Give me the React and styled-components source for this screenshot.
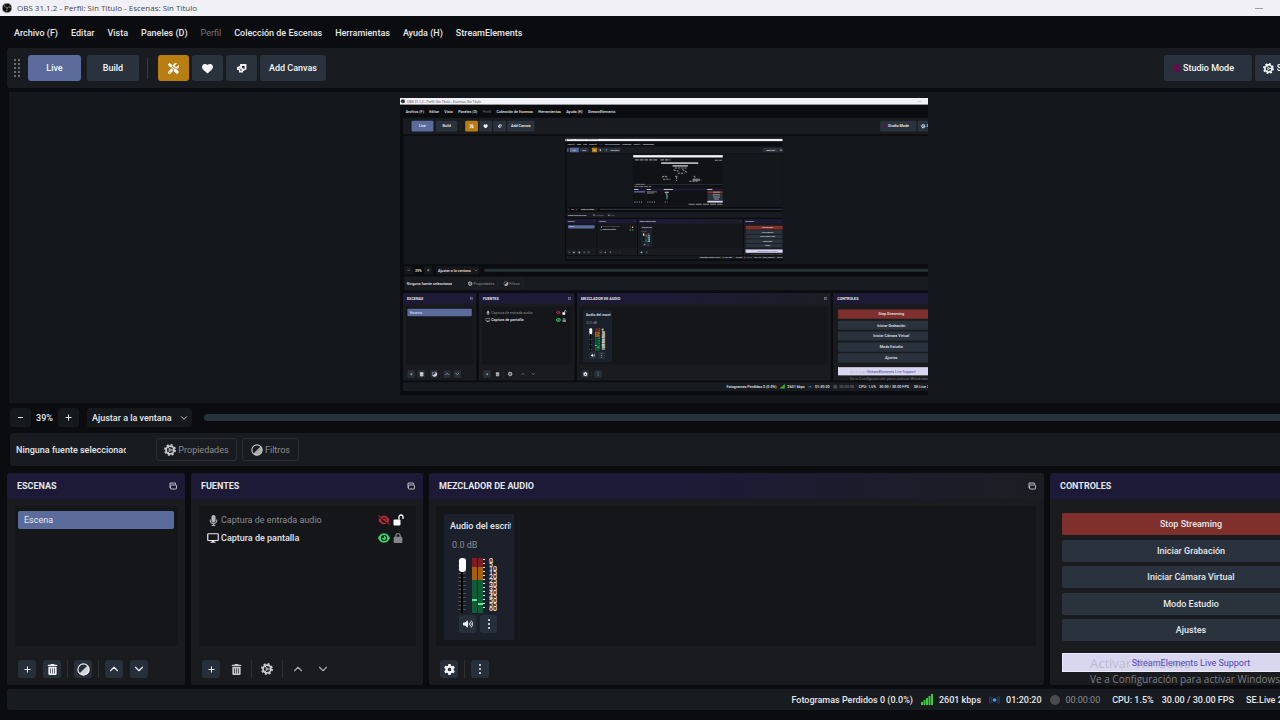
import React from "react";
import styled, { createGlobalStyle, css } from "styled-components";
import { SiObsstudio } from "react-icons/si";
import {
  FaScrewdriverWrench,
  FaHeart,
  FaTrashCan,
  FaMicrophone,
  FaEye,
  FaEyeSlash,
  FaLock,
  FaGear,
  FaVolumeHigh,
} from "react-icons/fa6";
import { LuChevronDown, LuChevronUp } from "react-icons/lu";

const PREVIEW_SCALE = 0.4125;
const PREVIEW_DEPTH = 2;

const c = {
  page: "#0b0c0f",
  bar: "#181b1f",
  button: "#2a333d",
  list: "#14161a",
  accent: "#5a6b9c",
  text: "#e6e7ea",
  dim: "#8b8d91",
  line: "#2b2f34",
};

const GlobalStyle = createGlobalStyle`
  html, body, #root { height: 100%; }
  body { margin: 0; background: ${c.page}; overflow: hidden; }
  *, *::before, *::after { box-sizing: border-box; }
  button, input, select { font: inherit; color: inherit; margin: 0; }
`;

const Screen = styled.div`
  display: flex;
  flex-direction: column;
  position: relative;
  height: 100%;
  overflow: hidden;
  background: ${c.page};
  color: ${c.text};
  font: 500 9px/12px Roboto, "Liberation Sans", sans-serif;
`;

const TitleBar = styled.header`
  display: flex;
  align-items: center;
  gap: 5px;
  flex: none;
  height: 16px;
  padding: 0 17px 0 2px;
  background: #f1f0f6;
  color: #45454b;
  font: 400 8px/12px "Open Sans", "Noto Sans", sans-serif;
`;

const AppMark = styled.span`
  display: flex;
  border-radius: 50%;
  background: #111;
  color: #d8d8dc;
`;

const WindowTitle = styled.h1`
  flex: 1;
  margin: 0;
  font: inherit;
`;

const Minimize = styled.button`
  width: 8px;
  height: 10px;
  padding: 0;
  border: 0;
  background: linear-gradient(#a0a0a6, #a0a0a6) center / 8px 1px no-repeat;
`;

const Frame = styled.div`
  display: flex;
  flex-direction: column;
  flex: 1;
  min-height: 0;
  width: calc(100% + 42px);
  padding: 0 0 10px 7px;
`;

const Menu = styled.nav`
  display: flex;
  align-items: center;
  gap: 13px;
  flex: none;
  height: 32px;
  padding: 2px 0 0 7px;
`;

const MenuLink = styled.a`
  color: ${(p) => (p.$dim ? "#75767a" : c.text)};
  font-weight: ${(p) => (p.$dim ? 400 : 500)};
  text-decoration: none;
  white-space: nowrap;
`;

const Toolbar = styled.div`
  display: flex;
  align-items: center;
  gap: 3px;
  flex: none;
  height: 40px;
  margin-bottom: 4px;
  padding: 0 4px 0 6px;
  background: ${c.bar};
  border-radius: 3px;
`;

const Grip = styled.span`
  width: 8px;
  height: 20px;
  margin-right: 4px;
  background: radial-gradient(circle, #6a6d71 1px, transparent 1px) 0 0 / 4px 4px;
`;

const ToolButton = styled.button`
  display: flex;
  align-items: center;
  justify-content: center;
  gap: 3px;
  width: ${(p) => p.$w}px;
  height: 26px;
  margin-right: ${(p) => p.$after || 0}px;
  padding: ${(p) => (p.$mark ? "0 8px 0 0" : "0")};
  border: 0;
  border-radius: 3px;
  background: ${(p) => p.$bg || c.button};
  color: #f6f6f8;
  white-space: nowrap;
`;

const ToolDivider = styled.span`
  width: 1px;
  height: 21px;
  margin: 0 7px 0 5px;
  background: #393a33;
`;

const Spacer = styled.span`
  flex: 1;
`;

const RecordMark = styled.span`
  width: 6px;
  height: 8px;
  border-radius: 3px;
  background: #650c4d;
`;

const Preview = styled.main`
  display: flex;
  align-items: center;
  justify-content: center;
  flex: 1;
  min-height: 0;
  margin: 0 3px 5px 2px;
  padding-bottom: 2px;
  background: #14171b;
  overflow: hidden;
`;

const Monitor = styled.div`
  flex: none;
  width: 528px;
  height: 297px;
  overflow: hidden;
`;

const MonitorCanvas = styled.div`
  width: 1280px;
  height: 720px;
  transform: scale(${PREVIEW_SCALE});
  transform-origin: 0 0;
`;

const ZoomRow = styled.div`
  display: flex;
  align-items: center;
  flex: none;
  height: 19px;
  margin: 0 0 6px 3px;
`;

const ZoomButton = styled.button`
  display: flex;
  align-items: center;
  justify-content: center;
  width: 21px;
  height: 19px;
  padding: 0;
  border: 0;
  border-radius: 3px;
  background: #16191c;
`;

const ZoomValue = styled.output`
  width: 27px;
  text-align: center;
`;

const SelectBox = styled.label`
  display: grid;
  grid-template-columns: 1fr 10px;
  align-items: center;
  width: 105px;
  height: 19px;
  margin: 0 12px 0 8px;
  padding-right: 3px;
  border-radius: 3px;
  background: #16191c;
`;

const Select = styled.select`
  appearance: none;
  width: 100%;
  height: 19px;
  padding: 0 0 0 5px;
  border: 0;
  background: transparent;
`;

const ScrollTrack = styled.div`
  flex: 1;
  height: 7px;
  border-radius: 4px;
  background: #28323a;
`;

const SourceRow = styled.div`
  display: flex;
  align-items: center;
  flex: none;
  height: 33px;
  margin: 0 0 7px 3px;
  padding-left: 6px;
  border-radius: 3px;
  background: ${c.bar};
`;

const SourceName = styled.span`
  width: 110px;
  margin-right: 30px;
  overflow: hidden;
  white-space: nowrap;
`;

const GhostButton = styled.button`
  display: flex;
  align-items: center;
  justify-content: center;
  gap: 2px;
  width: ${(p) => p.$w}px;
  height: 23px;
  margin-right: 5px;
  padding: 0;
  border: 1px solid ${c.line};
  border-radius: 3px;
  background: transparent;
  color: ${c.dim};
  font-weight: 400;
  svg { color: #c4c5c8; }
`;

const Docks = styled.div`
  display: grid;
  grid-template-columns: 178px 232px 1fr 272px;
  gap: 6px;
  flex: none;
  height: 212px;
  margin-bottom: 4px;
`;

const Dock = styled.section`
  display: flex;
  flex-direction: column;
  min-width: 0;
  border-radius: 3px;
  background: #191b1e;
  overflow: hidden;
`;

const DockHeader = styled.header`
  display: flex;
  align-items: center;
  justify-content: space-between;
  flex: none;
  height: 26px;
  padding: 0 8px 0 10px;
  background: ${(p) => (p.$fade ? "linear-gradient(90deg, #1c1a36 40%, #1c1d23)" : "#1c1a36")};
`;

const DockTitle = styled.h2`
  margin: 0;
  font: 700 9px/14px Roboto, "Liberation Sans", sans-serif;
`;

const FloatButton = styled.button`
  display: flex;
  padding: 0;
  border: 0;
  background: transparent;
  color: #b9bbc2;
`;

const List = styled.ul`
  flex: 1;
  margin: 7px 7px 0 8px;
  padding: ${(p) => p.$pad || "5px 4px 0 3px"};
  list-style: none;
  background: ${c.list};
`;

const SceneItem = styled.li`
  height: 18px;
  padding: 0 6px;
  border-radius: 2px;
  background: ${c.accent};
  font-weight: 400;
  line-height: 18px;
`;

const SourceItem = styled.li`
  display: grid;
  grid-template-columns: 12px 1fr 12px 12px;
  align-items: center;
  column-gap: 2px;
  height: 18px;
  color: ${(p) => (p.$off ? c.dim : c.text)};
  font-weight: ${(p) => (p.$off ? 400 : 500)};
`;

const SourceIcon = styled.span`
  display: flex;
  justify-content: center;
  color: ${(p) => p.$color || "#e8e8ea"};
`;

const Toggle = styled.button`
  display: flex;
  justify-content: center;
  padding: 0;
  border: 0;
  background: transparent;
  color: ${(p) => p.$color};
`;

const DockFooter = styled.footer`
  display: flex;
  align-items: center;
  flex: none;
  gap: 7px;
  height: 39px;
  padding: 7px 0 0 11px;
`;

const SmallButton = styled.button`
  display: flex;
  align-items: center;
  justify-content: center;
  width: ${(p) => p.$w || 18}px;
  height: 18px;
  padding: 0;
  border: 0;
  border-radius: 3px;
  background: ${(p) => (p.$flat ? "transparent" : "#27303a")};
  color: ${(p) => p.$color || "#f0f0f3"};
`;

const FooterDivider = styled.span`
  width: 1px;
  height: 18px;
  margin: 0 -1px;
  background: ${c.line};
`;

const MixerArea = styled.div`
  flex: 1;
  min-height: 0;
  margin: 7px 8px 0 7px;
  padding: 8px 8px 0;
  background: ${c.list};
`;

const Strip = styled.article`
  display: flex;
  flex-direction: column;
  width: 70px;
  height: 126px;
  padding: 6px 3px 6px 6px;
  border-radius: 2px;
  background: #1b202b;
`;

const StripName = styled.h3`
  margin: 0;
  font: inherit;
  white-space: nowrap;
  overflow: hidden;
`;

const StripLevel = styled.output`
  margin: 7px 0 0 2px;
  color: ${c.dim};
  font-weight: 400;
`;

const StripBody = styled.div`
  display: flex;
  height: 55px;
  margin: 7px 0 0 8px;
`;

const fader = css`
  width: 7px;
  height: 14px;
  border: 0;
  border-radius: 3px;
  background: #fff;
`;

const Fader = styled.input`
  appearance: none;
  writing-mode: vertical-lr;
  direction: rtl;
  width: 8px;
  height: 55px;
  margin-right: 6px;
  background:
    linear-gradient(#000, #000) center / 2px 100% no-repeat,
    repeating-linear-gradient(transparent 0 3px, #4a4e54 3px 4px);
  &::-webkit-slider-thumb { appearance: none; ${fader} }
`;

const StripButtons = styled.div`
  display: flex;
  gap: 4px;
  margin: 2px 0 0 9px;
`;

const ControlsBody = styled.div`
  padding: 14px 2px 0 12px;
`;

const ControlStack = styled.div`
  display: flex;
  flex-direction: column;
  justify-content: space-between;
  height: 128px;
  margin-bottom: 12px;
`;

const ControlButton = styled.button`
  width: 100%;
  height: 22px;
  padding: 0;
  border: 0;
  border-radius: 2px;
  background: ${(p) => (p.$live ? "#7f302c" : c.button)};
`;

const SupportLink = styled.a`
  display: block;
  height: 19px;
  border: 1px solid #eceaf8;
  background: #d9d7ef;
  color: #4b44bd;
  font-weight: 400;
  line-height: 18px;
  text-align: center;
  text-decoration: none;
`;

const StatusBar = styled.footer`
  display: flex;
  align-items: center;
  justify-content: flex-end;
  flex: none;
  height: 21px;
  background: ${c.bar};
  border-radius: 3px;
  white-space: nowrap;
`;

const StatusItem = styled.span`
  display: flex;
  align-items: center;
  gap: 6px;
  margin-right: ${(p) => p.$after}px;
  color: ${(p) => (p.$dim ? c.dim : c.text)};
  font-weight: ${(p) => (p.$dim ? 400 : 500)};
`;

const VersionItem = styled.span`
  width: 76px;
`;

const RecordDot = styled.span`
  width: 10px;
  height: 10px;
  border-radius: 50%;
  background: #4a4b4e;
`;

const Watermark = styled.aside`
  position: absolute;
  right: 0;
  bottom: 34px;
  width: 190px;
  color: rgba(140, 140, 146, 0.9);
  font: 400 10px/14px "Open Sans", "Noto Sans", sans-serif;
  white-space: nowrap;
  pointer-events: none;
`;

const WatermarkTitle = styled.p`
  margin: 0 0 1px;
  color: rgba(150, 150, 160, 0.45);
  font-size: 13px;
  line-height: 16px;
`;

const WatermarkText = styled.p`
  margin: 0;
`;

const CogIcon = ({ size = 12 }) => (
  <svg width={size} height={size} viewBox="0 0 24 24" fill="none" stroke="currentColor">
    <circle cx="12" cy="12" r="10" strokeWidth="4" strokeDasharray="3.9 3.95" />
    <circle cx="12" cy="12" r="7.8" strokeWidth="3.6" />
    <circle cx="12" cy="12" r="2" strokeWidth="2" />
    <path d="M14 12h6M11 10 8 5.500M11 14l-3 4.500" strokeWidth="2" />
  </svg>
);

const FilterIcon = ({ size = 12 }) => (
  <svg width={size} height={size} viewBox="0 0 24 24">
    <circle cx="12" cy="12" r="10.300" fill="none" stroke="currentColor" strokeWidth="2.200" />
    <path d="M19.500 4.500A10.500 10.500 0 0 1 4.500 19.500z" fill="currentColor" opacity="0.85" />
  </svg>
);

const HornIcon = () => (
  <svg width="10" height="10" viewBox="0 0 20 20" fill="none" stroke="currentColor" strokeWidth="3.600">
    <path d="M8 4h9v7.500l-4 2.500-5-3.500z" />
    <path d="M7 7 1.500 9.500M1.500 8v4.500H6M5.500 13v4.500h5V14" strokeWidth="3" />
  </svg>
);

const WindowsIcon = () => (
  <svg width="8" height="8" viewBox="0 0 16 16" fill="none" stroke="currentColor" strokeWidth="2">
    <path d="M2 12V2h11v3" />
    <rect x="3" y="6" width="12" height="8" rx="1" />
  </svg>
);

const ScreenIcon = () => (
  <svg width="12" height="10" viewBox="0 0 24 20" fill="none" stroke="currentColor" strokeWidth="2.400">
    <rect x="1.500" y="1.500" width="21" height="13.500" rx="1" />
    <path d="M7 18.500h10" />
    <path d="M9.500 15h5v3h-5z" fill="currentColor" stroke="none" />
  </svg>
);

const OpenLockIcon = () => (
  <svg width="11" height="12" viewBox="0 0 22 24">
    <rect x="1" y="11" width="14" height="12" rx="2" fill="currentColor" />
    <path d="M12 11V6a4 4 0 0 1 8 0v4" fill="none" stroke="currentColor" strokeWidth="2.600" />
  </svg>
);

const DotsIcon = () => (
  <svg width="4" height="12" viewBox="0 0 4 12" fill="currentColor">
    <circle cx="2" cy="2" r="1" />
    <circle cx="2" cy="6" r="1" />
    <circle cx="2" cy="10" r="1" />
  </svg>
);

const PlusIcon = () => (
  <svg width="7" height="7" viewBox="0 0 7 7" stroke="currentColor">
    <path d="M3.500 0.500v6M0.500 3.500h6" />
  </svg>
);

const MinusIcon = () => (
  <svg width="7" height="7" viewBox="0 0 7 7" stroke="currentColor">
    <path d="M1 3.500h5" />
  </svg>
);

const SignalIcon = () => (
  <svg width="12" height="11" viewBox="0 0 12 11" fill="#3ccb3c">
    <path d="M0 8h2v3H0zM2.500 6h2v5h-2zM5 4h2v7H5zM7.500 2h2v9h-2zM10 0h2v11h-2z" />
  </svg>
);

const LiveIcon = () => (
  <svg width="11" height="10" viewBox="0 0 12 10" fill="none" stroke="#1f5690">
    <circle cx="6" cy="5" r="2" fill="#4a9cf0" stroke="none" />
    <path d="M3.500 2a4 4 0 0 0 0 6M8.500 2a4 4 0 0 1 0 6M1.700 1a6 6 0 0 0 0 8M10.300 1a6 6 0 0 1 0 8" />
  </svg>
);

const METER_STEPS = [0, 5, 10, 15, 20, 25, 30, 35, 40, 45, 50, 55, 60];

const MeterDrawing = () => (
  <svg width="28" height="56" viewBox="0 0 28 56">
    {[0, 6].map((x) => (
      <g key={x}>
        <rect x={x} y="0" width="5" height="9" fill="#7d1f22" />
        <rect x={x} y="9" width="5" height="13" fill="#a5600f" />
        <rect x={x} y="22" width="5" height="33" fill="#0f5c38" />
      </g>
    ))}
    <rect x="0" y="41" width="5" height="2" fill="#4bf08a" />
    <rect x="6" y="45" width="5" height="2" fill="#4bf08a" />
    {METER_STEPS.map((v, i) => (
      <g key={v} fill="#e8e8ea">
        <rect x="11" y={i * 4 + 1} width="2" height="1" />
        <text x="17" y={i * 4 + 5} fontSize="7">
          {v}
        </text>
      </g>
    ))}
  </svg>
);

/* The innermost repetition of the screen, too small for readable text. */
const TinyScreen = () => (
  <svg width="528" height="297" viewBox="0 0 528 297">
    <rect width="528" height="297" fill="#101216" />
    <rect width="528" height="14" fill="#f1f0f6" />
    <path d="M12 28h130M160 28h60" stroke="#85878c" strokeWidth="6" strokeDasharray="22 5" />
    <path d="M480 30h44" stroke="#85878c" strokeWidth="6" strokeDasharray="20 4" />
    <rect x="165" y="42" width="218" height="10" fill="#b9bbc0" />
    <rect x="232" y="60" width="90" height="7" fill="#dcdde0" />
    <path
      d="M245 76h70M238 88l30 6M290 84l26 18M262 106h40M170 130q20-14 34 4M176 142h44M246 124h20M256 126v26M356 122l14 12M362 146h40M330 154h50"
      stroke="#8c8e92"
      strokeWidth="6"
      strokeDasharray="14 5"
      fill="none"
    />
    <rect x="350" y="138" width="42" height="14" fill="#777a80" />
    <path d="M0 173h528" stroke="#2c3640" strokeWidth="4" />
    <path d="M16 172h56M8 185h100" stroke="#a2a4a8" strokeWidth="4" strokeDasharray="24 4" />
    <path d="M4 203h524" stroke="#1c1a36" strokeWidth="12" />
    <path d="M6 202h26M80 202h24M180 202h54M436 202h30" stroke="#e0e1e4" strokeWidth="5" />
    <rect x="6" y="212" width="66" height="8" fill="#5a6b9c" />
    <path d="M82 216h58M82 223h40" stroke="#a2a4a8" strokeWidth="4" />
    <path d="M186 218h24M192 228h10M196 240h10" stroke="#d0d1d4" strokeWidth="6" />
    <rect x="194" y="232" width="10" height="28" fill="#3e6b56" />
    <path d="M8 276h50M84 276h50M186 276h16" stroke="#b5b7ba" strokeWidth="5" strokeDasharray="6 7" />
    <rect x="437" y="212" width="91" height="13" fill="#7f302c" />
    <rect x="437" y="227" width="91" height="38" fill="#2a333d" />
    <path d="M470 218h40M468 233h44M470 246h40M476 258h28" stroke="#c5c7ca" strokeWidth="4" />
    <rect x="437" y="268" width="91" height="11" fill="#d9d7ef" />
    <path d="M326 289h200" stroke="#c5c7ca" strokeWidth="4" strokeDasharray="36 6" />
  </svg>
);

const MENU = [
  "Archivo (F)",
  "Editar",
  "Vista",
  "Paneles (D)",
  "Perfil",
  "Colección de Escenas",
  "Herramientas",
  "Ayuda (H)",
  "StreamElements",
];

const CONTROLS = ["Stop Streaming", "Iniciar Grabación", "Iniciar Cámara Virtual", "Modo Estudio", "Ajustes"];

function DockPanel({ title, fade, fixed, children }) {
  return (
    <Dock>
      <DockHeader $fade={fade}>
        <DockTitle>{title}</DockTitle>
        {!fixed && (
          <FloatButton aria-label={`Separar ${title}`}>
            <WindowsIcon />
          </FloatButton>
        )}
      </DockHeader>
      {children}
    </Dock>
  );
}

function ObsScreen({ depth }) {
  return (
    <Screen>
      <TitleBar>
        <AppMark>
          <SiObsstudio size={10} />
        </AppMark>
        <WindowTitle>OBS 31.1.2 - Perfil: Sin Título - Escenas: Sin Título</WindowTitle>
        <Minimize aria-label="Minimizar" />
      </TitleBar>

      <Frame>
        <Menu>
          {MENU.map((m) => (
            <MenuLink key={m} href="#" $dim={m === "Perfil"}>
              {m}
            </MenuLink>
          ))}
        </Menu>

        <Toolbar>
          <Grip />
          <ToolButton $w={53} $bg={c.accent} $after={3}>Live</ToolButton>
          <ToolButton $w={52}>Build</ToolButton>
          <ToolDivider />
          <ToolButton $w={31} $bg="#b87e12" aria-label="Herramientas">
            <FaScrewdriverWrench size={11} />
          </ToolButton>
          <ToolButton $w={31} aria-label="Favoritos">
            <FaHeart size={11} />
          </ToolButton>
          <ToolButton $w={31} aria-label="Anuncios">
            <HornIcon />
          </ToolButton>
          <ToolButton $w={66}>Add Canvas</ToolButton>
          <Spacer />
          <ToolButton $w={88} $mark>
            <RecordMark />
            Studio Mode
          </ToolButton>
          <ToolButton $w={63}>
            <CogIcon size={11} />
            Settings
          </ToolButton>
        </Toolbar>

        <Preview>
          <Monitor>
            {depth > 0 ? (
              <MonitorCanvas inert aria-hidden="true">
                <ObsScreen depth={depth - 1} />
              </MonitorCanvas>
            ) : (
              <TinyScreen />
            )}
          </Monitor>
        </Preview>

        <ZoomRow>
          <ZoomButton aria-label="Reducir"><MinusIcon /></ZoomButton>
          <ZoomValue>39%</ZoomValue>
          <ZoomButton aria-label="Ampliar"><PlusIcon /></ZoomButton>
          <SelectBox>
            <Select aria-label="Escala de la vista previa">
              <option>Ajustar a la ventana</option>
            </Select>
            <LuChevronDown size={10} />
          </SelectBox>
          <ScrollTrack />
        </ZoomRow>

        <SourceRow>
          <SourceName>Ninguna fuente seleccionada</SourceName>
          <GhostButton $w={81}>
            <CogIcon />
            Propiedades
          </GhostButton>
          <GhostButton $w={57}>
            <FilterIcon />
            Filtros
          </GhostButton>
        </SourceRow>

        <Docks>
          <DockPanel title="ESCENAS">
            <List>
              <SceneItem>Escena</SceneItem>
            </List>
            <DockFooter>
              <SmallButton aria-label="Añadir escena"><PlusIcon /></SmallButton>
              <SmallButton aria-label="Eliminar escena"><FaTrashCan size={11} /></SmallButton>
              <FooterDivider />
              <SmallButton aria-label="Filtros de escena"><FilterIcon size={13} /></SmallButton>
              <FooterDivider />
              <SmallButton aria-label="Subir escena"><LuChevronUp size={14} /></SmallButton>
              <SmallButton aria-label="Bajar escena"><LuChevronDown size={14} /></SmallButton>
            </DockFooter>
          </DockPanel>

          <DockPanel title="FUENTES">
            <List $pad="5px 12px 0 8px">
              <SourceItem $off>
                <SourceIcon $color="#b5b6b9"><FaMicrophone size={11} /></SourceIcon>
                Captura de entrada audio
                <Toggle $color="#c42a3c" aria-label="Mostrar audio"><FaEyeSlash size={12} /></Toggle>
                <Toggle $color="#fff" aria-label="Bloquear audio"><OpenLockIcon /></Toggle>
              </SourceItem>
              <SourceItem>
                <SourceIcon><ScreenIcon /></SourceIcon>
                Captura de pantalla
                <Toggle $color="#35d468" aria-label="Ocultar pantalla"><FaEye size={12} /></Toggle>
                <Toggle $color="#85868a" aria-label="Desbloquear pantalla"><FaLock size={10} /></Toggle>
              </SourceItem>
            </List>
            <DockFooter>
              <SmallButton aria-label="Añadir fuente"><PlusIcon /></SmallButton>
              <SmallButton $flat $color="#c9cacd" aria-label="Eliminar fuente"><FaTrashCan size={11} /></SmallButton>
              <FooterDivider />
              <SmallButton $flat $color="#c9cacd" aria-label="Propiedades de fuente"><CogIcon /></SmallButton>
              <FooterDivider />
              <SmallButton $flat $color="#a9abaf" aria-label="Subir fuente"><LuChevronUp size={14} /></SmallButton>
              <SmallButton $flat $color="#a9abaf" aria-label="Bajar fuente"><LuChevronDown size={14} /></SmallButton>
            </DockFooter>
          </DockPanel>

          <DockPanel title="MEZCLADOR DE AUDIO" fade>
            <MixerArea>
              <Strip>
                <StripName>Audio del escritorio</StripName>
                <StripLevel>0.0 dB</StripLevel>
                <StripBody>
                  <Fader type="range" min="0" max="100" defaultValue="100" aria-label="Volumen" />
                  <MeterDrawing />
                </StripBody>
                <StripButtons>
                  <SmallButton $w={17} aria-label="Silenciar"><FaVolumeHigh size={10} /></SmallButton>
                  <SmallButton $w={17} aria-label="Opciones de audio"><DotsIcon /></SmallButton>
                </StripButtons>
              </Strip>
            </MixerArea>
            <DockFooter>
              <SmallButton aria-label="Propiedades avanzadas"><FaGear size={11} /></SmallButton>
              <FooterDivider />
              <SmallButton aria-label="Menú del mezclador"><DotsIcon /></SmallButton>
            </DockFooter>
          </DockPanel>

          <DockPanel title="CONTROLES" fixed>
            <ControlsBody>
              <ControlStack>
                {CONTROLS.map((label, i) => (
                  <ControlButton key={label} $live={i === 0}>
                    {label}
                  </ControlButton>
                ))}
              </ControlStack>
              <SupportLink href="#">StreamElements Live Support</SupportLink>
            </ControlsBody>
          </DockPanel>
        </Docks>

        <StatusBar>
          <StatusItem $after={8}>Fotogramas Perdidos 0 (0.0%)</StatusItem>
          <StatusItem $after={8}>
            <SignalIcon />
            2601 kbps
          </StatusItem>
          <StatusItem $after={8}>
            <LiveIcon />
            01:20:20
          </StatusItem>
          <StatusItem $dim $after={12}>
            <RecordDot />
            00:00:00
          </StatusItem>
          <StatusItem $after={8}>CPU: 1.5%</StatusItem>
          <StatusItem $after={12}>30.00 / 30.00 FPS</StatusItem>
          <VersionItem>SE.Live 25</VersionItem>
        </StatusBar>
      </Frame>

      <Watermark>
        <WatermarkTitle>Activar Windows</WatermarkTitle>
        <WatermarkText>Ve a Configuración para activar Windows.</WatermarkText>
      </Watermark>
    </Screen>
  );
}

export default function App() {
  return (
    <>
      <GlobalStyle />
      <ObsScreen depth={PREVIEW_DEPTH} />
    </>
  );
}
